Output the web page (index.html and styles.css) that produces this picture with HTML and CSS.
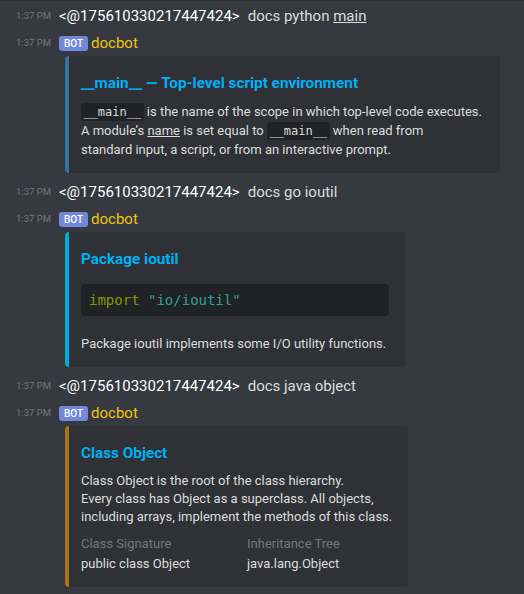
FILE: index.html
```html
<!DOCTYPE html>
<html lang="en">
<head>
<meta charset="utf-8">
<title>docbot</title>
<link rel="stylesheet" href="styles.css">
</head>
<body>
<div class="chat">
  <div class="group">
    <div class="row">
      <span class="time">1:37 PM</span>
      <span class="user">&lt;@175610330217447424&gt;</span>
      <span class="content">docs python <u>main</u></span>
    </div>
    <div class="row">
      <span class="time">1:37 PM</span>
      <span class="badge">BOT</span>
      <span class="bot-name">docbot</span>
    </div>
    <div class="embed embed-python">
      <div class="embed-title">__main__ — Top-level script environment</div>
      <div class="embed-desc desc-loose"><code class="inline">__main__</code> is the name of the scope in which top-level code executes.<br>A module’s <u>name</u> is set equal to <code class="inline">__main__</code> when read from<br>standard input, a script, or from an interactive prompt.</div>
    </div>
  </div>

  <div class="group">
    <div class="row">
      <span class="time">1:37 PM</span>
      <span class="user">&lt;@175610330217447424&gt;</span>
      <span class="content">docs go ioutil</span>
    </div>
    <div class="row">
      <span class="time">1:37 PM</span>
      <span class="badge">BOT</span>
      <span class="bot-name">docbot</span>
    </div>
    <div class="embed embed-go">
      <div class="embed-title">Package ioutil</div>
      <div class="embed-desc">
        <pre class="codeblock"><span class="kw">import</span> <span class="str">"io/ioutil"</span></pre>
        Package ioutil implements some I/O utility functions.
      </div>
    </div>
  </div>

  <div class="group">
    <div class="row">
      <span class="time">1:37 PM</span>
      <span class="user">&lt;@175610330217447424&gt;</span>
      <span class="content">docs java object</span>
    </div>
    <div class="row">
      <span class="time">1:37 PM</span>
      <span class="badge">BOT</span>
      <span class="bot-name">docbot</span>
    </div>
    <div class="embed embed-java">
      <div class="embed-title">Class Object</div>
      <div class="embed-desc">Class Object is the root of the class hierarchy.<br>Every class has Object as a superclass. All objects,<br>including arrays, implement the methods of this class.</div>
      <div class="fields">
        <div class="field">
          <div class="field-name">Class Signature</div>
          <div class="field-value">public class Object</div>
        </div>
        <div class="field">
          <div class="field-name">Inheritance Tree</div>
          <div class="field-value">java.lang.Object</div>
        </div>
      </div>
    </div>
  </div>
</div>
</body>
</html>
```
FILE: styles.css
```css
* { box-sizing: border-box; }

html, body {
  margin: 0;
  height: 100%;
  background: #36393f;
}

body {
  font-family: Roboto, "Noto Sans", sans-serif;
  color: #dcddde;
}

.chat {
  border-top: 1px solid #2d2f34;
  padding: 3.5px 0 0 16px;
  display: flex;
  flex-direction: column;
}

.group {
  display: flex;
  flex-direction: column;
  align-items: flex-start;
}

.group + .group {
  margin-top: 7.5px;
}

.row {
  display: flex;
  align-items: center;
  height: 22px;
  line-height: 22px;
  font-size: 15px;
  white-space: nowrap;
}

.row + .row {
  margin-top: 5.5px;
}

.time {
  width: 43px;
  flex: none;
  font-size: 9.5px;
  color: #72767d;
}

.user {
  color: #ffffff;
}

.content {
  margin-left: 8px;
  color: #dcddde;
}

.badge {
  height: 15px;
  line-height: 15px;
  padding: 0 5px;
  margin-right: 3px;
  border-radius: 3px;
  background: #7289da;
  color: #ffffff;
  font-size: 10px;
  font-weight: 500;
}

.bot-name {
  color: #f1c40f;
}

.embed {
  margin: 2px 0 0 49px;
  padding: 16px 16px 14px 12px;
  border-left: 4px solid #4f545c;
  border-radius: 4px;
  background: #2f3136;
  font-size: 13px;
  line-height: 18px;
}

.embed-python { width: 435px; border-left-color: #3572a5; }
.embed-go     { width: 340px; border-left-color: #00add8; }
.embed-java   { width: 343px; border-left-color: #b07219; }

.embed-title {
  font-size: 15.3px;
  line-height: 22px;
  font-weight: 700;
  color: #00b0f4;
  white-space: nowrap;
}

.embed-desc {
  display: flow-root;
  margin-top: 8px;
  color: #dcddde;
  white-space: nowrap;
}

.desc-loose {
  line-height: 19px;
}

.inline {
  font-family: "DejaVu Sans Mono", monospace;
  font-size: 12px;
  line-height: 0;
  padding: 0.2em;
  border-radius: 3px;
  background: #202225;
  color: #dcddde;
}

.codeblock {
  margin: 6px 0 19px;
  padding: 7px 8px;
  border-radius: 4px;
  background: #202225;
  font-family: "DejaVu Sans Mono", monospace;
  font-size: 14px;
  line-height: 18px;
  color: #b9bbbe;
}

.kw { color: #859900; }
.str { color: #2aa198; }

.fields {
  margin-top: 9px;
  display: grid;
  grid-template-columns: 166px auto;
}

.field-name {
  color: #72767d;
}

.field-value {
  margin-top: 2px;
  color: #dcddde;
}
```
